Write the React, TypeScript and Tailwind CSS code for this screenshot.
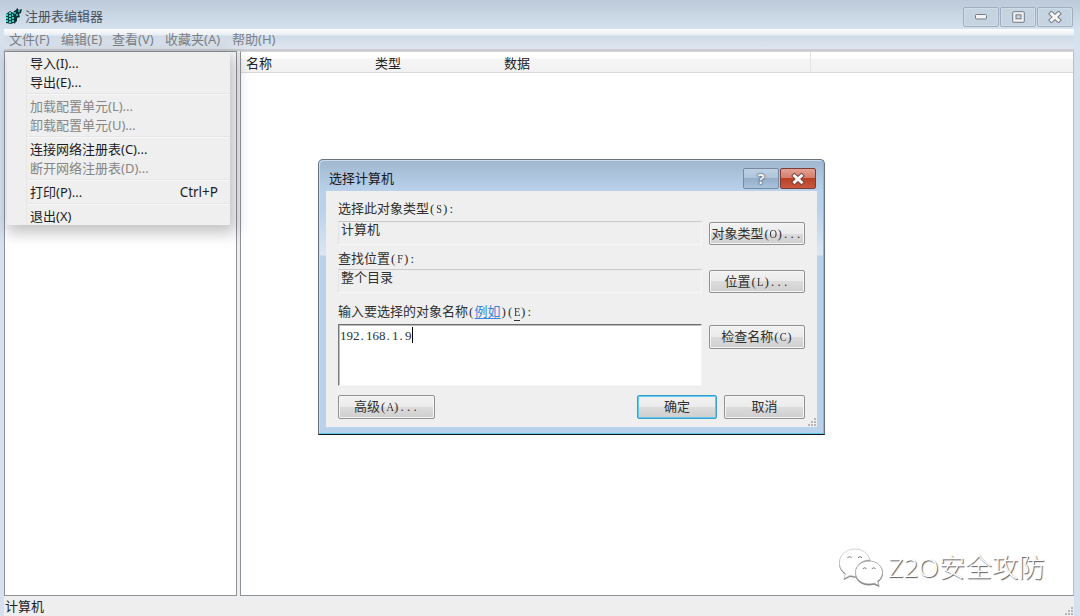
import { Fragment, type ReactNode } from 'react';

type MenuEntry = { label: string; shortcut?: string; disabled?: boolean };

const MENUS = [
  { label: '文件(F)', width: 'w-[52px]' },
  { label: '编辑(E)', width: 'w-[51px]' },
  { label: '查看(V)', width: 'w-[53px]' },
  { label: '收藏夹(A)', width: 'w-[67px]' },
  { label: '帮助(H)', width: 'w-[60px]' },
];

const FILE_MENU: MenuEntry[][] = [
  [{ label: '导入(I)...' }, { label: '导出(E)...' }],
  [
    { label: '加载配置单元(L)...', disabled: true },
    { label: '卸载配置单元(U)...', disabled: true },
  ],
  [{ label: '连接网络注册表(C)...' }, { label: '断开网络注册表(D)...', disabled: true }],
  [{ label: '打印(P)...', shortcut: 'Ctrl+P' }],
  [{ label: '退出(X)' }],
];

const COLUMNS = [
  { label: '名称', width: 'w-[129px]' },
  { label: '类型', width: 'w-[129px]' },
  { label: '数据', width: 'w-[307px]' },
];

// Half-width latin characters, each in a cell half as wide as a CJK glyph
function Half({ children }: { children: string }) {
  return (
    <span className="font-['Liberation_Serif',serif]">
      {children.split('').map((c, i) => (
        <span
          key={i}
          className={`inline-flex w-[6.5px] ${
            /[.:]/.test(c) ? 'justify-start pl-px' : /[A-Z]/.test(c) ? 'scale-x-80 justify-center' : 'justify-center'
          }`}
        >
          {c}
        </span>
      ))}
    </span>
  );
}

function RegeditIcon() {
  return (
    <svg className="h-[17px] w-[17px] shrink-0" viewBox="0 0 17 17">
      <path d="M1 6l4-3 5 3 1 8-5 2-5-1z" fill="#0d4345" />
      <path d="M1 6h2v2H1zM4 4h2v2H4zM4 7h2v2H4zM1 9h2v2H1zM4 10h2v2H4zM7 9h2v2H7zM1 12h2v2H1zM4 13h2v2H4zM7 12h2v2H7zM7 6h2v2H7z" fill="#45c9c4" />
      <path d="M9 3l2-1 1-2 2 2 3-1-1 4-2 1 1 3-3 1v3l-3 3V9L8 7z" fill="#0d3437" />
      <path d="M9 4h2v2H9zM13 2h2v2h-2zM11 6h2v2h-2z" fill="#31a5a2" />
    </svg>
  );
}

function CaptionButton({ children }: { children: ReactNode }) {
  return (
    <div className="flex h-[20px] w-[36px] items-center justify-center rounded-[2px] border border-[#9fafc0] bg-[#c6d3e1] shadow-[inset_0_0_0_1px_#d0dce8]">
      {children}
    </div>
  );
}

function CrossGlyph({ stroke }: { stroke: string }) {
  return (
    <svg width="14" height="12" viewBox="0 0 14 12">
      <path d="M3.5 2.8l7 6.400M10.5 2.800l-7 6.400" stroke={stroke} strokeWidth="4.8" strokeLinecap="square" />
      <path d="M3.5 2.800l7 6.400M10.5 2.800l-7 6.400" stroke="#f6f6f6" strokeWidth="2.900" strokeLinecap="square" />
    </svg>
  );
}

function Grip() {
  return (
    <svg width="9" height="9" viewBox="0 0 9 9" fill="#b4b7bb">
      <path d="M6 0h2v2H6zM3 3h2v2H3zM6 3h2v2H6zM0 6h2v2H0zM3 6h2v2H3zM6 6h2v2H6z" />
    </svg>
  );
}

function TitleBar() {
  return (
    <div className="flex h-[29px] shrink-0 items-start bg-linear-to-b from-[#bccad9] to-[#d5e1ee] pr-[7px] pl-[5px]">
      <div className="flex pt-[8px]">
        <RegeditIcon />
        <span className="pl-[3px] leading-[17px] text-[#48515c]">注册表编辑器</span>
      </div>
      <div className="ml-auto flex gap-px pt-[7px]">
        <CaptionButton>
          <svg width="12" height="6" viewBox="0 0 12 6">
            <rect x=".5" y=".5" width="11" height="4.5" rx="1" fill="#f3f3f3" stroke="#737c86" />
          </svg>
        </CaptionButton>
        <CaptionButton>
          <svg width="13" height="12" viewBox="0 0 13 12">
            <rect x=".7" y=".7" width="11.6" height="10.6" rx="1" fill="#f1f1f1" stroke="#737c86" />
            <rect x="4" y="3.8" width="5" height="4" fill="#c6d3e1" stroke="#737c86" />
          </svg>
        </CaptionButton>
        <CaptionButton>
          <CrossGlyph stroke="#737c86" />
        </CaptionButton>
      </div>
    </div>
  );
}

function MenuBar() {
  return (
    <div className="ml-[4px] mr-[6px] flex h-[20px] shrink-0 bg-[linear-gradient(#fdfdfe_0,#e9eef4_6px,#cfdbe7_7px,#dfe6ef_20px)] pl-[5px] text-[#7c8188]">
      {MENUS.map((m) => (
        <span key={m.label} className={`${m.width} shrink-0 whitespace-nowrap leading-[21px]`}>
          {m.label}
        </span>
      ))}
    </div>
  );
}

function FileMenu() {
  return (
    <div className="absolute top-[52px] left-[7px] flex h-[173px] w-[223px] bg-[#efefef] pt-[2px] shadow-[3px_5px_14px_3px_rgba(0,0,0,0.24)]">
      <div className="w-[20px] border-r border-[#e7e7e7]" />
      <div className="flex-1">
        {FILE_MENU.map((group, i) => (
          <Fragment key={i}>
            {i > 0 && <div className="mt-px mb-[2px] h-[2px] border-t border-[#e5e5e5] bg-[#f7f7f7]" />}
            {group.map((item) => (
              <div
                key={item.label}
                className={`flex h-[19px] justify-between pr-[12px] pl-[3px] leading-[19px] ${
                  item.disabled ? 'text-[#868686]' : 'text-[#1c1c1c]'
                }`}
              >
                <span>{item.label}</span>
                {item.shortcut && <span className="text-[13.5px]">{item.shortcut}</span>}
              </div>
            ))}
          </Fragment>
        ))}
      </div>
    </div>
  );
}

function DialogButton({ children, className = '', primary }: { children: ReactNode; className?: string; primary?: boolean }) {
  return (
    <button
      className={`flex shrink-0 items-center justify-center whitespace-nowrap rounded-[2px] border bg-[linear-gradient(#f2f2f2_0,#ebebeb_50%,#dcdcdc_50%,#cfcfcf_100%)] ${
        primary ? 'border-[#3f9cc8] shadow-[inset_0_0_0_1px_#62cdf2]' : 'border-[#919191] shadow-[inset_0_0_0_1px_#f5f5f5]'
      } ${className}`}
    >
      {children}
    </button>
  );
}

function ReadOnlyField({ children }: { children: ReactNode }) {
  return (
    <div className="h-[24px] w-[364px] border-t border-r border-b border-l border-t-[#c9c9c9] border-r-[#f6f6f6] border-b-[#f6f6f6] border-l-[#e4e4e4] pl-[2px] leading-[15px]">
      {children}
    </div>
  );
}

function SelectComputerDialog() {
  return (
    <div className="absolute top-[159px] left-[318px] flex h-[276px] w-[507px] flex-col rounded-t-[5px] border border-b-[#101820] border-[#66727d] bg-[linear-gradient(#a0b7d0_0,#b9d1ea_31px,#b9d1ea_50px,#dbe7f4_95px,#b9d1ea_96px)] shadow-[inset_-1px_-1px_0_#5ccbe8,inset_1px_1px_0_#cddcea]">
      <div className="flex h-[31px] shrink-0 items-start justify-between pr-[8px] pl-[10px]">
        <span className="pt-[8px] leading-[20px] text-[#17191c]">选择计算机</span>
        <div className="flex gap-px pt-[8px]">
          <div className="flex h-[21px] w-[36px] items-center justify-center rounded-[2px] border border-[#7589a0] bg-[linear-gradient(#bfd0e2_0,#b0c5db_45%,#93acc7_46%,#a8c3dd_100%)] text-[15px] leading-none font-bold text-[#f5f5f5] [text-shadow:0_0_1px_#435568,0_0_1px_#435568,0_0_2px_#435568]">
            ?
          </div>
          <div className="flex h-[21px] w-[36px] items-center justify-center rounded-[2px] border border-[#7b3b38] bg-[linear-gradient(#e2a294_0,#d77f6d_45%,#b83e24_46%,#c9583c_100%)]">
            <CrossGlyph stroke="#754342" />
          </div>
        </div>
      </div>
      <div className="relative mr-[7px] mb-[7px] ml-[7px] flex flex-1 flex-col bg-[#efefef] pt-[7px] pr-[12px] pl-[12px] text-[#303030]">
        <div className="h-[20px] leading-[20px]">
          选择此对象类型<Half>(S):</Half>
        </div>
        <div className="mt-[3px] flex h-[24px] justify-between">
          <ReadOnlyField>计算机</ReadOnlyField>
          <DialogButton className="mt-px h-[23px] w-[96px]">
            对象类型<Half>(O)...</Half>
          </DialogButton>
        </div>
        <div className="mt-[3px] h-[20px] leading-[20px]">
          查找位置<Half>(F):</Half>
        </div>
        <div className="mt-px flex h-[24px] justify-between">
          <ReadOnlyField>整个目录</ReadOnlyField>
          <DialogButton className="mt-px h-[23px] w-[96px]">
            位置<Half>(L)...</Half>
          </DialogButton>
        </div>
        <div className="mt-[8px] h-[20px] leading-[20px]">
          输入要选择的对象名称<Half>(</Half>
          <span className="text-[#3a86d8] underline underline-offset-2">例如</span>
          <Half>)(</Half>
          <span className="border-b border-[#333]">
            <Half>E</Half>
          </span>
          <Half>):</Half>
        </div>
        <div className="mt-[3px] flex h-[62px] items-start justify-between">
          <div className="flex h-[62px] w-[364px] items-start border border-t-[#6e6e6e] border-r-[#f5f5f5] border-b-[#f5f5f5] border-l-[#7a7a7a] bg-white pt-px pl-px shadow-[inset_1px_1px_0_#bdbdbd]">
            <span className="leading-[18px]">
              <Half>192.168.1.9</Half>
            </span>
            <span className="mt-px h-[16px] w-px bg-black" />
          </div>
          <DialogButton className="mt-px h-[24px] w-[96px]">
            检查名称<Half>(C)</Half>
          </DialogButton>
        </div>
        <div className="mt-[9px] flex h-[24px]">
          <DialogButton className="w-[97px]">
            高级<Half>(A)...</Half>
          </DialogButton>
          <DialogButton primary className="ml-auto w-[80px]">
            确定
          </DialogButton>
          <DialogButton className="ml-[7px] w-[81px]">取消</DialogButton>
        </div>
        <div className="absolute right-0 bottom-0">
          <Grip />
        </div>
      </div>
    </div>
  );
}

function Watermark() {
  return (
    <>
      <span className="absolute top-[559px] left-[896px] text-[41px] leading-[48px] whitespace-nowrap text-black/2">先知社区</span>
      <div className="absolute top-[547px] left-[838px] flex items-center">
        <svg width="46" height="40" viewBox="0 0 46 40" fill="#fff" className="[filter:drop-shadow(0_1px_0.5px_#777)]">
          <path d="M17 2C8 2 1.500 8 1.500 15.500c0 5 2.500 8.500 6 11l-1.500 5 6-3c2 .6 4 .8 6 .7C16 20 23 12.500 32 13 30 6 24 2 17 2z" stroke="#c4c4c4" strokeWidth=".7" />
          <path d="M31 14c-8 0-13.500 5-13.500 11.500S23 37 31 37c1.700 0 3.500-.3 5-.8l5 2.300-1.400-4.300c3-2.200 4.900-5.200 4.900-8.700C44.500 19 38.500 14 31 14z" stroke="#a0a0a0" strokeWidth=".8" />
          <g fill="none" stroke="#777" strokeWidth="1">
            <path d="M9.500 11a2.200 2.200 0 0 1 4 0M20 11a2.200 2.200 0 0 1 4 0M25 22a1.800 1.800 0 0 1 3.400 0M34 22a1.800 1.800 0 0 1 3.400 0" />
          </g>
        </svg>
        <span className="pl-[4px] text-[26.5px] leading-[40px] font-light whitespace-nowrap text-white [text-shadow:1px_1px_1px_#555]">
          Z2O安全攻防
        </span>
      </div>
    </>
  );
}

export default function App() {
  return (
    <div className="relative flex h-[616px] w-[1080px] flex-col overflow-hidden bg-[linear-gradient(#bccad9_0,#d5e1ee_29px,#d5e1ee_100%)] font-['Noto_Sans','Noto_Sans_CJK_SC',sans-serif] text-[13px]">
      <TitleBar />
      <MenuBar />
      <div className="mr-[6px] ml-[4px] flex min-h-0 flex-1 flex-col bg-[#eeeeee]">
        <div className="h-[2px] shrink-0 bg-[#c9cccf]" />
        <div className="flex h-[545px] shrink-0 gap-[3px]">
          <div className="w-[233px] shrink-0 border border-[#8f949b] bg-white" />
          <div className="flex-1 border border-t-[#d5d5d5] border-r-[#b9bfc8] border-b-[#8f949b] border-l-[#8f949b] bg-white">
            <div className="flex h-[21px] border-b border-[#d9d9d9] bg-[linear-gradient(#fff_0,#fff_6px,#f6f6f6_7px,#f1f1f1_100%)] pl-[5px] leading-[22px] text-[#222]">
              {COLUMNS.map((c, i) => (
                <span key={c.label} className={`${c.width} ${i === 2 ? 'border-r border-[#e4e4e4]' : ''}`}>
                  {c.label}
                </span>
              ))}
            </div>
          </div>
        </div>
        <div className="flex flex-1 items-end justify-between pl-[1px] leading-[19px] text-[#222]">
          <span>计算机</span>
          <Grip />
        </div>
      </div>
      <FileMenu />
      <Watermark />
      <SelectComputerDialog />
    </div>
  );
}
